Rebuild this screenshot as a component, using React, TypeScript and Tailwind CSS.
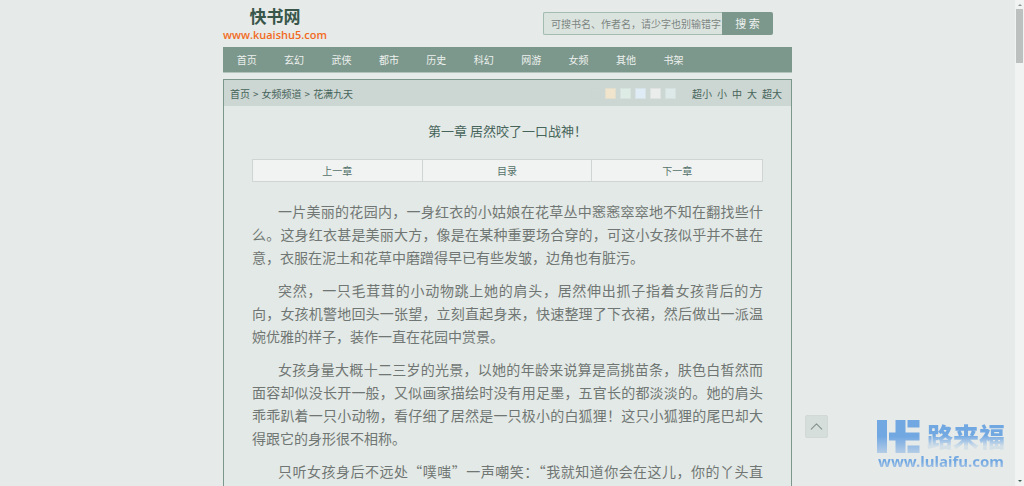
import React from "react";
import { ChevronUp } from "lucide-react";

const categories = ["首页", "玄幻", "武侠", "都市", "历史", "科幻", "网游", "女频", "其他", "书架"];

const swatches = [
  { name: "默认", color: "bg-[#ccd6d2]" },
  { name: "米黄", color: "bg-[#f1e4cd]" },
  { name: "浅绿", color: "bg-[#deece6]" },
  { name: "浅蓝", color: "bg-[#dfecf6]" },
  { name: "浅灰", color: "bg-[#ebecec]" },
  { name: "青灰", color: "bg-[#dde9e8]" },
];

const sizes = ["超小", "小", "中", "大", "超大"];

const paragraphs = [
  "一片美丽的花园内，一身红衣的小姑娘在花草丛中窸窸窣窣地不知在翻找些什么。这身红衣甚是美丽大方，像是在某种重要场合穿的，可这小女孩似乎并不甚在意，衣服在泥土和花草中磨蹭得早已有些发皱，边角也有脏污。",
  "突然，一只毛茸茸的小动物跳上她的肩头，居然伸出抓子指着女孩背后的方向，女孩机警地回头一张望，立刻直起身来，快速整理了下衣裙，然后做出一派温婉优雅的样子，装作一直在花园中赏景。",
  "女孩身量大概十二三岁的光景，以她的年龄来说算是高挑苗条，肤色白皙然而面容却似没长开一般，又似画家描绘时没有用足墨，五官长的都淡淡的。她的肩头乖乖趴着一只小动物，看仔细了居然是一只极小的白狐狸！这只小狐狸的尾巴却大得跟它的身形很不相称。",
  "只听女孩身后不远处“噗嗤”一声嘲笑：“我就知道你会在这儿，你的丫头直",
];

function Header() {
  return (
    <header className="flex items-start justify-between pt-2 pr-[19px]">
      <a href="#home" className="flex flex-col items-center">
        <span className="font-['Liberation_Sans','Noto_Sans_CJK_SC',sans-serif] text-[17px] leading-5 font-bold text-[#38564a]">快书网</span>
        <span className="font-['Open_Sans',sans-serif] text-[11px] leading-[14px] font-semibold text-[#f26a1e]">www.kuaishu5.com</span>
      </a>
      <form className="mt-1 flex h-[23px] w-[230px]" onSubmit={(e) => e.preventDefault()}>
        <input
          type="text"
          aria-label="搜索"
          placeholder="可搜书名、作者名，请少字也别输错字"
          className="min-w-0 flex-1 rounded-l-xs border border-r-0 border-[#a3bbb1] bg-[#dbe3df] pl-[7px] text-[10px] text-[#4f655c] outline-none placeholder:text-[#7b8581]"
        />
        <button type="submit" className="w-[51px] rounded-r-xs bg-[#7c978b] text-[11px] text-[#eef2f0]">
          搜 索
        </button>
      </form>
    </header>
  );
}

function Nav() {
  return (
    <nav className="mt-[5px] border-b border-[#b3c4bd] bg-[#7c978b]">
      <ul className="grid grid-cols-12 text-center text-[10px] leading-[25px] text-[#edf1ef]">
        {categories.map((c) => (
          <li key={c}>
            <a href={"#" + c}>{c}</a>
          </li>
        ))}
      </ul>
    </nav>
  );
}

function Toolbar() {
  return (
    <div className="flex h-[26px] items-center bg-[#ccd6d2] pr-[9px] pl-[6px] text-[10px] text-[#46645a]">
      <div className="flex flex-1 gap-[3px]">
        <a href="#home">首页</a>
        <span>&gt;</span>
        <a href="#girls">女频频道</a>
        <span>&gt;</span>
        <a href="#book">花满九天</a>
      </div>
      <div className="flex gap-1">
        {swatches.map((s) => (
          <button key={s.name} type="button" aria-label={s.name} className={"size-[11px] border border-[#cad4d0]/40 " + s.color} />
        ))}
      </div>
      <div className="ml-4 flex gap-[5px]">
        {sizes.map((s) => (
          <button key={s} type="button">
            {s}
          </button>
        ))}
      </div>
    </div>
  );
}

function ChapterLinks() {
  return (
    <div className="mt-[17px] grid grid-cols-3 divide-x divide-[#ced5d2] border border-[#ced5d2] bg-[#f1f3f2] text-center text-[10px] leading-[21px] text-[#55716a]">
      <a href="#prev">上一章</a>
      <a href="#list">目录</a>
      <a href="#next">下一章</a>
    </div>
  );
}

function Brand() {
  return (
    <div className="pointer-events-none absolute right-[19px] bottom-4 w-[128px]">
      <div className="flex items-start justify-between">
        <svg viewBox="0 0 43 33" className="h-[33px] w-[43px]" aria-hidden="true">
          <defs>
            <linearGradient id="mark" x1="0" y1="0" x2="0" y2="33" gradientUnits="userSpaceOnUse">
              <stop offset="0.5" stopColor="#72a8e2" />
              <stop offset="1" stopColor="#b4cce6" />
            </linearGradient>
          </defs>
          <path fill="url(#mark)" d="M0 0H10V33H0ZM18.500 0H28.500V12.500H42.500V20.500H28.500V33H18.500V20.500H12V12.500H18.500ZM30.500 0H42.500V7.500H30.500ZM30.500 25.500H42.500V33H30.500Z" />
        </svg>
        <span className="bg-gradient-to-b from-[#72a8e2] from-50% to-[#d3dfe7] to-85% bg-clip-text text-[26px] leading-[31px] font-black text-transparent">路来福</span>
      </div>
      <div className="bg-gradient-to-b from-[#72a8e2] from-50% to-[#b4cce6] bg-clip-text text-center font-['Noto_Sans'] text-[15px] leading-[17px] font-bold text-transparent">
        www.lulaifu.com
      </div>
    </div>
  );
}

function ScrollTrack() {
  return (
    <div className="flex w-[9px] flex-col items-center justify-between bg-[#f1f3f2] py-1" aria-hidden="true">
      <div className="flex w-full flex-col items-center gap-[3px]">
        <svg viewBox="0 0 4 2" className="h-[2px] w-1">
          <path fill="#8b9692" d="M0 2L2 0L4 2Z" />
        </svg>
        <div className="h-[54px] w-[7px] bg-[#bcc1bf]" />
      </div>
      <svg viewBox="0 0 4 2" className="h-[2px] w-1">
        <path fill="#3d5b50" d="M0 0L2 2L4 0Z" />
      </svg>
    </div>
  );
}

export default function App() {
  return (
    <div lang="zh-CN" className="relative flex h-screen overflow-hidden bg-[#e6eae8] font-['Noto_Sans_CJK_SC','Noto_Sans',sans-serif]">
      <div className="flex min-w-0 flex-1 justify-center">
        <div className="flex w-full max-w-[569px] flex-col">
          <Header />
          <Nav />
          <main className="mt-[6px] flex-1 border border-b-0 border-[#7c978b] bg-[#e3e9e6]">
            <Toolbar />
            <article className="px-7 pt-[13px]">
              <h1 className="text-center text-[13px] leading-[23px] text-[#46645a]">第一章 居然咬了一口战神！</h1>
              <ChapterLinks />
              <div className="mt-[18px] flex flex-col gap-[10px] text-justify indent-[26px] text-[14px] leading-[23px] text-[#707673]">
                {paragraphs.map((p) => (
                  <p key={p.slice(0, 4)} className="last:[text-align-last:justify]">
                    {p}
                  </p>
                ))}
              </div>
            </article>
          </main>
        </div>
      </div>
      <ScrollTrack />
      <button
        type="button"
        aria-label="返回顶部"
        className="absolute right-[196px] bottom-12 flex size-[23px] items-center justify-center rounded-xs border border-[#d0d9d5] bg-[#d5dedb] text-[#84918c]"
      >
        <ChevronUp size={21} strokeWidth={1.25} className="shrink-0" />
      </button>
      <Brand />
    </div>
  );
}
